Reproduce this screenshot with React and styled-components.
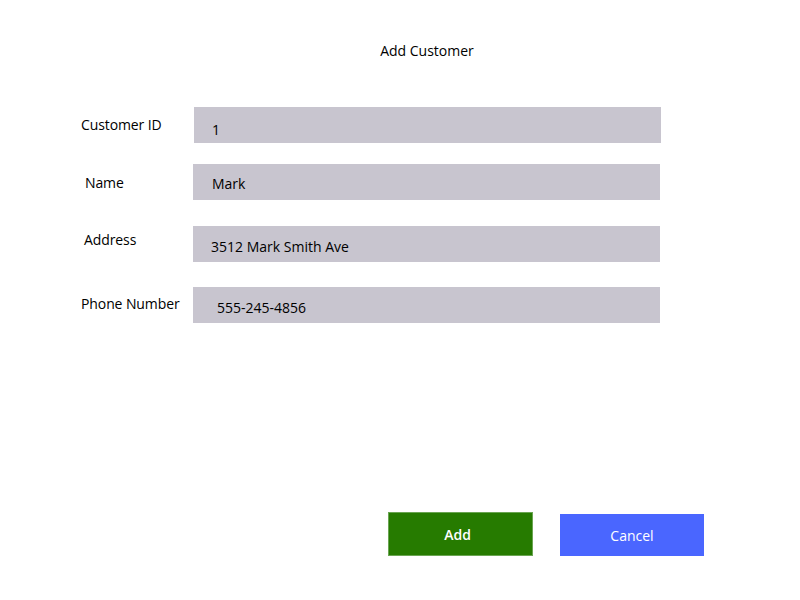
import React from 'react';
import { createGlobalStyle, styled } from 'styled-components';

const GlobalStyle = createGlobalStyle`
  html, body {
    margin: 0;
    padding: 0;
    background: #ffffff;
  }
  body {
    font-family: 'Open Sans', 'Noto Sans', sans-serif;
    color: #000000;
  }
`;

const Page = styled.div`
  width: 800px;
  height: 600px;
  box-sizing: border-box;
  padding-top: 41px;
  display: flex;
  flex-direction: column;
`;

const Title = styled.h1`
  margin: 0;
  font-size: 14px;
  font-weight: 400;
  line-height: 20px;
  text-align: center;
  padding-left: 54px;
`;

const Form = styled.div`
  display: flex;
  flex-direction: column;
  margin-top: 46px;
`;

const FieldRow = styled.div`
  display: flex;
  align-items: center;
  margin-top: ${(p) => p.$gap || 0}px;
`;

const Label = styled.label`
  box-sizing: border-box;
  width: ${(p) => p.$boxX}px;
  padding-left: ${(p) => p.$x}px;
  font-size: 14px;
  line-height: 20px;
  letter-spacing: -0.1px;
  position: relative;
  top: ${(p) => p.$dy || 0}px;
`;

const Field = styled.div`
  box-sizing: border-box;
  width: 467px;
  height: 36px;
  background: #c8c5cf;
  padding-left: ${(p) => p.$indent}px;
  padding-top: ${(p) => p.$padTop}px;
  font-size: 14px;
  line-height: 20px;
`;

const Actions = styled.div`
  display: flex;
  align-items: flex-start;
  gap: 27px;
  padding-left: 388px;
  margin-top: 189px;
`;

const ActionButton = styled.button`
  box-sizing: border-box;
  width: ${(p) => p.$w}px;
  height: ${(p) => p.$h}px;
  margin-top: ${(p) => p.$top || 0}px;
  border: 1px solid ${(p) => p.$border};
  background: ${(p) => p.$bg};
  color: #ffffff;
  font-family: 'Open Sans', 'Noto Sans', sans-serif;
  font-size: 14px;
  font-weight: ${(p) => p.$weight || 400};
  padding: 0 ${(p) => p.$shift || 0}px 0 0;
  cursor: pointer;
`;

const fields = [
  { label: 'Customer ID', value: '1', x: 81, boxX: 194, gap: 0, dy: 0, indent: 18, padTop: 13 },
  { label: 'Name', value: 'Mark', x: 85, boxX: 193, gap: 21, dy: 1, indent: 19, padTop: 10 },
  { label: 'Address', value: '3512 Mark Smith Ave', x: 84, boxX: 193, gap: 26, dy: -4, indent: 18, padTop: 11 },
  { label: 'Phone Number', value: '555-245-4856', x: 81, boxX: 193, gap: 25, dy: -1, indent: 24, padTop: 11 },
];

function App() {
  return (
    <>
      <GlobalStyle />
      <Page>
        <Title>Add Customer</Title>
        <Form>
          {fields.map((f) => (
            <FieldRow key={f.label} $gap={f.gap}>
              <Label $x={f.x} $boxX={f.boxX} $dy={f.dy}>
                {f.label}
              </Label>
              <Field $indent={f.indent} $padTop={f.padTop}>
                {f.value}
              </Field>
            </FieldRow>
          ))}
        </Form>
        <Actions>
          <ActionButton $w={145} $h={44} $bg="#267b00" $border="#6aa552" $weight={600} $shift={6}>
            Add
          </ActionButton>
          <ActionButton $w={144} $h={42} $top={2} $bg="#4a66ff" $border="#4a66ff">
            Cancel
          </ActionButton>
        </Actions>
      </Page>
    </>
  );
}

export default App;
